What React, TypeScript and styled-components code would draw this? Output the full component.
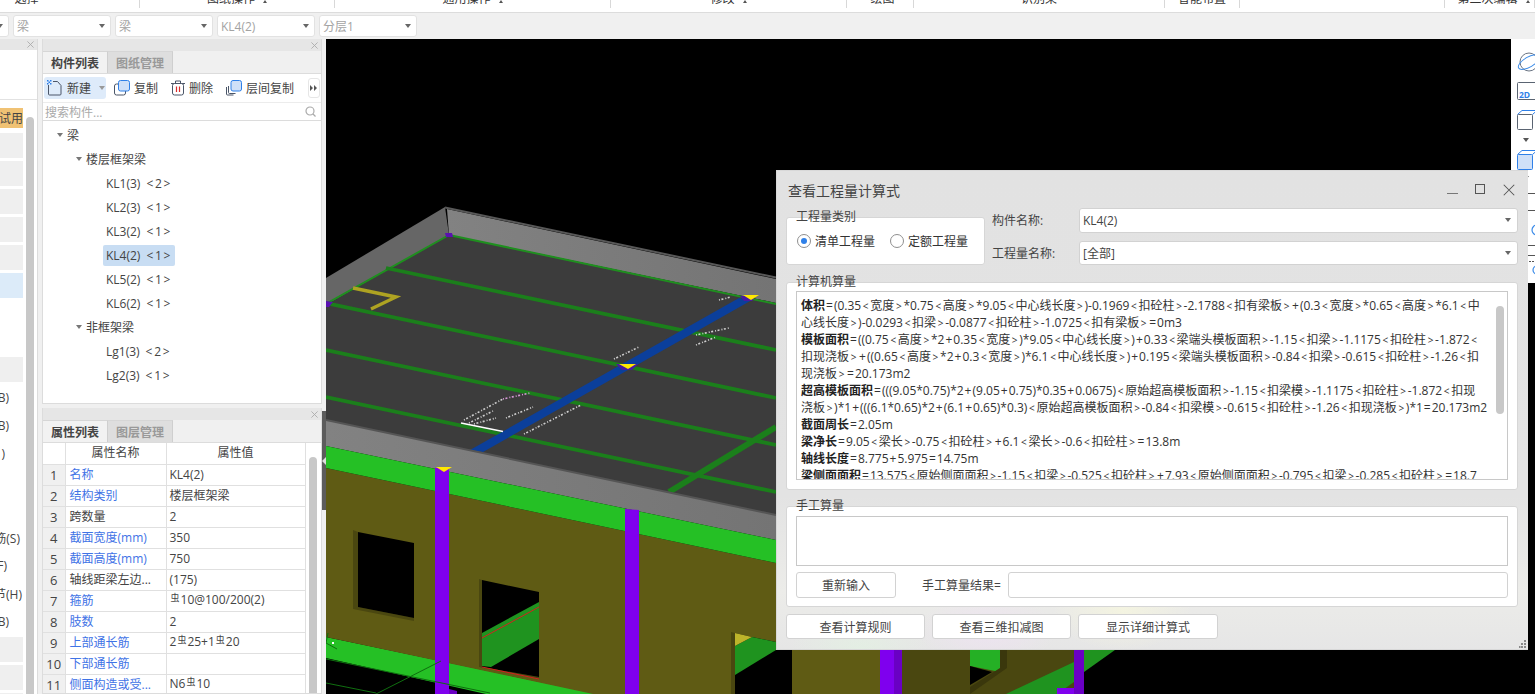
import React from "react";
import styled, { createGlobalStyle } from "styled-components";

const FONT = `"Open Sans","Noto Sans CJK SC",sans-serif`;

const Global = createGlobalStyle`
  html, body { margin: 0; padding: 0; background: #f0f0f0; overflow: hidden; }
  * { box-sizing: border-box; }
  body { font-family: ${FONT}; font-size: 12px; color: #444; }
  svg { flex: none; }
`;

const Page = styled.div`
  position: relative;
  width: 1535px;
  height: 694px;
  overflow: hidden;
  display: flex;
  flex-direction: column;
  background: #f0f0f0;
`;

/* ---------- ribbon remains ---------- */
const MenuBar = styled.div`
  flex: none;
  height: 13px;
  display: flex;
  background: #fff;
  border-bottom: 1px solid #dcdcdc;
  overflow: hidden;
`;
const MenuSection = styled.div<{ $w: number; $pl?: number; $pr?: number }>`
  flex: none;
  width: ${(p) => p.$w}px;
  height: 8px;
  padding: 0 ${(p) => p.$pr ?? 0}px 0 ${(p) => p.$pl ?? 0}px;
  display: flex;
  justify-content: center;
  gap: 8px;
  border-right: 1px solid #d8d8d8;
  color: #333;
  line-height: 14px;
  & > span { display: block; margin-top: -8px; white-space: nowrap; }
`;
const MenuCaret = styled.i`
  display: block;
  width: 0;
  height: 0;
  border-left: 2px solid transparent;
  border-right: 2px solid transparent;
  border-bottom: 3px solid #555;
`;

const SelectBar = styled.div`
  flex: none;
  height: 26px;
  display: flex;
  align-items: center;
  gap: 4px;
  margin-left: -89px;
`;
const BarSelect = styled.div`
  flex: none;
  width: 98px;
  height: 22px;
  display: flex;
  align-items: center;
  justify-content: space-between;
  padding: 0 5px 0 3px;
  background: #fff;
  border: 1px solid #e2e2e2;
  border-radius: 3px;
  color: #a3a3a3;
`;
const Caret = styled.i<{ $c?: string; $ml?: number }>`
  flex: none;
  display: block;
  width: 0;
  height: 0;
  margin-left: ${(p) => p.$ml ?? 0}px;
  border-left: 3px solid transparent;
  border-right: 3px solid transparent;
  border-top: 4px solid ${(p) => p.$c ?? "#666"};
`;

/* ---------- workspace ---------- */
const Workspace = styled.div`
  flex: 1;
  min-height: 0;
  display: flex;
`;

const Stub = styled.div`
  flex: none;
  width: 38px;
  margin-right: 4px;
  background: #fff;
  border-right: 1px solid #dcdcdc;
  display: flex;
  flex-direction: column;
  overflow: hidden;
`;
const StubHeader = styled.div`
  flex: none;
  height: 11px;
  background: #e6e6e6;
  display: flex;
  justify-content: flex-end;
  align-items: center;
  padding-right: 3px;
`;
const StubTop = styled.div`
  flex: none;
  height: 50px;
  border-bottom: 1px solid #e2e2e2;
`;
const StubBody = styled.div`
  flex: 1;
  display: flex;
  gap: 3px;
`;
const StubRows = styled.div`
  flex: none;
  width: 23px;
  padding-top: 8px;
  display: flex;
  flex-direction: column;
  gap: 3px;
`;
const StubRow = styled.div<{ $bg?: string; $h?: number; $inset?: number; $mb?: number }>`
  flex: none;
  height: ${(p) => p.$h ?? 25}px;
  margin-bottom: ${(p) => p.$mb ?? 0}px;
  background: ${(p) => p.$bg ?? "transparent"};
  display: flex;
  align-items: center;
  justify-content: flex-end;
  padding-right: ${(p) => p.$inset ?? 0}px;
  white-space: nowrap;
  overflow: hidden;
  color: #444;
`;
const StubThumb = styled.div`
  flex: none;
  width: 8px;
  margin-top: 17px;
  background: #c8c8c8;
  border-radius: 4px 4px 0 0;
`;

const Column = styled.div`
  flex: none;
  width: 280px;
  display: flex;
  flex-direction: column;
  gap: 4px;
`;
const Panel = styled.div<{ $h: number }>`
  flex: none;
  height: ${(p) => p.$h}px;
  background: #fff;
  border: 1px solid #dcdcdc;
  border-top: 0;
  display: flex;
  flex-direction: column;
  overflow: hidden;
`;
const PanelHeader = styled.div`
  flex: none;
  height: 12px;
  background: #e6e6e6;
  display: flex;
  justify-content: flex-end;
  align-items: center;
  padding-right: 3px;
`;
const TabStrip = styled.div`
  flex: none;
  height: 23px;
  display: flex;
  background: #f0f0f0;
  border-bottom: 1px solid #dcdcdc;
`;
const Tab = styled.div<{ $on?: boolean }>`
  flex: none;
  width: 65px;
  display: flex;
  align-items: center;
  justify-content: center;
  font-weight: 700;
  color: ${(p) => (p.$on ? "#444" : "#999")};
  background: ${(p) => (p.$on ? "#f2f2f2" : "#dedede")};
  border-right: 1px solid #cfcfcf;
  border-top: 1px solid #d6d6d6;
`;
const Tools = styled.div`
  flex: none;
  height: 28px;
  display: flex;
  align-items: center;
  padding-left: 1px;
`;
const ToolButton = styled.div<{ $w: number; $on?: boolean; $ml?: number }>`
  flex: none;
  width: ${(p) => p.$w}px;
  height: 22px;
  margin-left: ${(p) => p.$ml ?? 0}px;
  display: flex;
  align-items: center;
  gap: 4px;
  padding-left: ${(p) => (p.$on ? 3 : 1)}px;
  border-radius: 3px;
  background: ${(p) => (p.$on ? "#deebfa" : "transparent")};
  color: #444;
  white-space: nowrap;
`;
const MoreButton = styled.div`
  margin-left: auto;
  margin-right: 1px;
  width: 12px;
  height: 20px;
  border: 1px solid #e6e6e6;
  border-radius: 3px;
  display: flex;
  align-items: center;
  justify-content: center;
`;
const Search = styled.div`
  flex: none;
  height: 19px;
  display: flex;
  align-items: center;
  justify-content: space-between;
  padding: 0 5px 0 2px;
  border-top: 1px solid #ececec;
  border-bottom: 1px solid #dcdcdc;
  color: #aaa;
`;
const Tree = styled.div`
  flex: 1;
  padding-top: 2px;
`;
const TreeRow = styled.div<{ $indent: number }>`
  height: 24px;
  display: flex;
  align-items: center;
  padding-left: ${(p) => p.$indent}px;
  color: #444;
  white-space: nowrap;
`;
const TreeCaret = styled.i`
  display: block;
  width: 0;
  height: 0;
  margin-right: 4px;
  border-left: 3.5px solid transparent;
  border-right: 3.5px solid transparent;
  border-top: 4px solid #777;
`;
const TreeLabel = styled.span<{ $on?: boolean }>`
  display: block;
  height: 21px;
  line-height: 21px;
  padding: 0 3px;
  border-radius: 2px;
  background: ${(p) => (p.$on ? "#c8ddf3" : "transparent")};
`;
const Count = styled.span`
  margin-left: 6px;
  letter-spacing: 1.7px;
`;

const PropsBody = styled.div`
  flex: 1;
  min-height: 0;
  display: flex;
  overflow: hidden;
`;
const PropsTable = styled.table`
  flex: none;
  width: 262px;
  height: 0;
  border-collapse: collapse;
  table-layout: fixed;
  & th, & td {
    height: 21px;
    padding: 0 3px;
    border: 1px solid #e0e0e0;
    font-weight: 400;
    white-space: nowrap;
    overflow: hidden;
    text-overflow: clip;
    line-height: 18px;
    color: #444;
  }
  & tr:first-child th { border-top: 0; }
  & th:first-child, & td:first-child { border-left: 0; }
`;
const IndexCell = styled.td`
  && { background: #f0f0f0; text-align: center; padding: 0; font-size: 13px; }
`;
const NameCell = styled.td<{ $blue?: boolean }>`
  && { color: ${(p) => (p.$blue ? "#3f73e6" : "#444")}; padding-left: 4px; }
`;
const HeadCell = styled.th`
  && { text-align: center; }
`;
const Rebar = styled.span`
  font-size: 9px;
  position: relative;
  top: -3px;
  margin: 0 1px;
`;
const PropsTrack = styled.div`
  flex: 1;
  display: flex;
  justify-content: center;
  padding-top: 14px;
`;
const PropsThumb = styled.div`
  width: 8px;
  background: #c8c8c8;
  border-radius: 4px 4px 0 0;
`;

const Splitter = styled.div`
  flex: none;
  width: 4px;
  padding-top: 372px;
  background: #f0f0f0;
`;
const SplitHandle = styled.div`
  position: relative;
  height: 99px;
  background: #5c5c5c;
  &::after {
    content: "";
    position: absolute;
    left: 0;
    top: 46px;
    border-top: 4px solid transparent;
    border-bottom: 4px solid transparent;
    border-right: 4px solid #ddd;
  }
`;

const Canvas = styled.div`
  position: relative;
  flex: 1;
  background: #000;
  overflow: hidden;
`;
const Scene = styled.svg`
  display: block;
  width: 1209px;
  height: 655px;
`;
const ToolRail = styled.div`
  position: absolute;
  top: 0;
  right: 0;
  width: 24px;
  height: 244px;
  background: #fff;
  overflow: hidden;
  padding: 14px 0 0 6px;
  display: flex;
  flex-direction: column;
  align-items: flex-start;
`;
const RailIcon = styled.svg<{ $mb: number }>`
  flex: none;
  display: block;
  margin-bottom: ${(p) => p.$mb}px;
  overflow: visible;
`;
const RailCaret = styled.i`
  flex: none;
  display: block;
  margin: 0 0 8px 6px;
  width: 0;
  height: 0;
  border-left: 3px solid transparent;
  border-right: 3px solid transparent;
  border-top: 4px solid #555;
`;

/* ---------- dialog ---------- */
const Dialog = styled.div`
  position: absolute;
  left: 776px;
  top: 170px;
  width: 752px;
  height: 480px;
  padding: 0 10px 0 9px;
  background:
    radial-gradient(ellipse 70px 40px at 11% 100%, rgba(225,245,225,.55), transparent),
    radial-gradient(ellipse 70px 36px at 28% 96%, rgba(240,225,245,.7), transparent),
    radial-gradient(ellipse 70px 40px at 46% 92%, rgba(250,250,220,.6), transparent),
    linear-gradient(180deg, #e2e2e2 0%, #e3e3e3 68%, #ecece9 88%, #e6e6e6 100%);
  border: 1px solid #d8d8d8;
  border-width: 1px 0 1px 1px;
  color: #333;
`;
const TitleRow = styled.div`
  height: 37px;
  display: flex;
  align-items: center;
  justify-content: space-between;
  padding: 0 3px 0 2px;
`;
const Title = styled.div`
  font-size: 14px;
  color: #444;
`;
const WindowButtons = styled.div`
  display: flex;
  gap: 17px;
  align-items: center;
`;
const TopRow = styled.div`
  display: flex;
  height: 57px;
`;
const Group = styled.div<{ $w: number; $h: number; $mt: number }>`
  position: relative;
  flex: none;
  width: ${(p) => p.$w}px;
  height: ${(p) => p.$h}px;
  margin-top: ${(p) => p.$mt}px;
  background: #fff;
  border: 1px solid #d6d6d6;
  border-radius: 3px;
`;
const Legend = styled.span`
  position: absolute;
  left: 9px;
  top: -7px;
  line-height: 12px;
  color: #444;
`;
const RadioRow = styled.div`
  height: 100%;
  display: flex;
  align-items: center;
  padding: 0 0 0 10px;
`;
const Radio = styled.div<{ $ml?: number }>`
  display: flex;
  align-items: center;
  gap: 4px;
  margin-left: ${(p) => p.$ml ?? 0}px;
`;
const RadioDot = styled.i<{ $on?: boolean }>`
  display: flex;
  align-items: center;
  justify-content: center;
  width: 14px;
  height: 14px;
  border-radius: 50%;
  background: #fff;
  border: 1px solid #8f8f8f;
  &::after {
    content: "";
    display: ${(p) => (p.$on ? "block" : "none")};
    width: 6px;
    height: 6px;
    border-radius: 50%;
    background: #2f80e8;
  }
`;
const Fields = styled.div`
  flex: 1;
  margin-left: 7px;
  display: flex;
  flex-direction: column;
  gap: 8px;
`;
const Field = styled.div`
  display: flex;
  align-items: center;
  height: 25px;
`;
const FieldLabel = styled.span`
  flex: none;
  width: 87px;
  color: #444;
`;
const FieldSelect = styled.div`
  flex: 1;
  height: 100%;
  display: flex;
  align-items: center;
  justify-content: space-between;
  padding: 0 6px 0 3px;
  background: #fff;
  border: 1px solid #d2d2d2;
  border-radius: 3px;
  color: #444;
`;
const FormulaBox = styled.div`
  position: relative;
  margin: 8px 0 0 9px;
  width: 712px;
  height: 189px;
  border: 1px solid #c8c8c8;
  padding: 5px 0 0 4px;
  overflow: hidden;
`;
const FormulaLine = styled.div`
  height: 17px;
  line-height: 17px;
  white-space: nowrap;
  color: #333;
  & strong { font-weight: 700; color: #222; }
`;
const Sym = styled.span<{ $small?: boolean }>`
  font-size: ${(p) => (p.$small ? 10 : 12)}px;
  margin: 0 ${(p) => (p.$small ? 1.7 : 1)}px;
`;
const FormulaThumb = styled.div`
  position: absolute;
  right: 3px;
  top: 14px;
  width: 8px;
  height: 108px;
  border-radius: 4px;
  background: #c8c8c8;
`;
const ManualArea = styled.div`
  margin: 9px 0 0 9px;
  width: 712px;
  height: 50px;
  background: #fff;
  border: 1px solid #c8c8c8;
`;
const ManualRow = styled.div`
  margin: 6px 0 0 9px;
  width: 712px;
  height: 26px;
  display: flex;
  align-items: center;
`;
const ActionButton = styled.div<{ $w: number }>`
  flex: none;
  width: ${(p) => p.$w}px;
  height: 100%;
  display: flex;
  align-items: center;
  justify-content: center;
  background: #fff;
  border: 1px solid #d2d2d2;
  border-radius: 3px;
  color: #444;
`;
const ResultLabel = styled.span`
  flex: none;
  width: 112px;
  padding-left: 26px;
  white-space: nowrap;
  color: #444;
`;
const ResultInput = styled.div`
  flex: 1;
  height: 100%;
  background: #fff;
  border: 1px solid #d2d2d2;
  border-radius: 3px;
`;
const ButtonRow = styled.div`
  margin-top: 7px;
  height: 25px;
  display: flex;
  gap: 7px;
`;
const Grip = styled.svg`
  position: absolute;
  right: 1px;
  bottom: 1px;
`;

const CloseIcon = ({ c = "#aaa", s = 7 }: { c?: string; s?: number }) => (
  <svg width={s} height={s} viewBox="0 0 8 8"><path d="M.5.5l7 7M7.5.5l-7 7" stroke={c} strokeWidth={s > 8 ? 0.7 : 1} fill="none" /></svg>
);

const IconNew = () => (
  <svg width="16" height="16" viewBox="0 0 16 16">
    <path d="M1.500 5V14q0 1 1 1h10.500q1 0 1-1V5.500L10.500 1.500H6" fill="none" stroke="#4a5568" strokeWidth="1" />
    <path d="M0 0h1.500v1.500H0zM3 0h1.500v1.500H3zM0 3h1.500v1.500H0zM3 3h1.500v1.500H3zM1.500 1.500H3V3H1.500z" fill="#2f80e8" />
  </svg>
);
const IconCopy = () => (
  <svg width="16" height="16" viewBox="0 0 16 16">
    <rect x=".5" y="4" width="11" height="11" rx="2" fill="#fff" stroke="#4a5568" />
    <rect x="4.500" y=".5" width="11" height="10.500" rx="2" fill="#cfe0f8" stroke="#2f80e8" />
  </svg>
);
const IconTrash = () => (
  <svg width="14" height="16" viewBox="0 0 14 16">
    <path d="M0 3.500h14M4.500 3V1h5v2" fill="none" stroke="#4a5568" />
    <rect x="1.500" y="3.500" width="11" height="11.500" rx="2" fill="#fff" stroke="#4a5568" />
    <path d="M5.500 6.500v5.500M8.500 6.500v5.500" stroke="#d92c2c" strokeWidth="1.2" />
  </svg>
);
const IconLayerCopy = () => (
  <svg width="16" height="16" viewBox="0 0 16 16">
    <path d="M.5 7v7q0 1 1 1h6M2.500 6v6.500q0 1 1 1h6" fill="none" stroke="#4a5568" />
    <rect x="5" y=".5" width="10.500" height="10.500" rx="2" fill="#cfe0f8" stroke="#2f80e8" />
  </svg>
);

const LINES: [string, string][] = [
  ["体积", "=(0.35<宽度>*0.75<高度>*9.05<中心线长度>)-0.1969<扣砼柱>-2.1788<扣有梁板>+(0.3<宽度>*0.65<高度>*6.1<中"],
  ["", "心线长度>)-0.0293<扣梁>-0.0877<扣砼柱>-1.0725<扣有梁板>=0m3"],
  ["模板面积", "=((0.75<高度>*2+0.35<宽度>)*9.05<中心线长度>)+0.33<梁端头模板面积>-1.15<扣梁>-1.1175<扣砼柱>-1.872<"],
  ["", "扣现浇板>+((0.65<高度>*2+0.3<宽度>)*6.1<中心线长度>)+0.195<梁端头模板面积>-0.84<扣梁>-0.615<扣砼柱>-1.26<扣"],
  ["", "现浇板>=20.173m2"],
  ["超高模板面积", "=(((9.05*0.75)*2+(9.05+0.75)*0.35+0.0675)<原始超高模板面积>-1.15<扣梁模>-1.1175<扣砼柱>-1.872<扣现"],
  ["", "浇板>)*1+(((6.1*0.65)*2+(6.1+0.65)*0.3)<原始超高模板面积>-0.84<扣梁模>-0.615<扣砼柱>-1.26<扣现浇板>)*1=20.173m2"],
  ["截面周长", "=2.05m"],
  ["梁净长", "=9.05<梁长>-0.75<扣砼柱>+6.1<梁长>-0.6<扣砼柱>=13.8m"],
  ["轴线长度", "=8.775+5.975=14.75m"],
  ["梁侧面面积", "=13.575<原始侧面面积>-1.15<扣梁>-0.525<扣砼柱>+7.93<原始侧面面积>-0.795<扣梁>-0.285<扣砼柱>=18.7"],
];

const FormulaText = ({ text }: { text: string }) => (
  <>
    {text.split(/([<>=+])/).map((part, i) =>
      /^[<>=+]$/.test(part) ? (
        <Sym key={i} $small={part === "<" || part === ">"}>{part}</Sym>
      ) : (
        part
      )
    )}
  </>
);

const R = () => <Rebar>虫</Rebar>;
const PROPS: [string, boolean, React.ReactNode][] = [
  ["名称", true, "KL4(2)"],
  ["结构类别", true, "楼层框架梁"],
  ["跨数量", false, "2"],
  ["截面宽度(mm)", true, "350"],
  ["截面高度(mm)", true, "750"],
  ["轴线距梁左边...", false, "(175)"],
  ["箍筋", true, <><R />10@100/200(2)</>],
  ["肢数", true, "2"],
  ["上部通长筋", true, <>2<R />25+1<R />20</>],
  ["下部通长筋", true, ""],
  ["侧面构造或受...", true, <>N6<R />10</>],
];

const TREE = [
  { t: "KL1(3)", c: "<2>" }, { t: "KL2(3)", c: "<1>" }, { t: "KL3(2)", c: "<1>" },
  { t: "KL4(2)", c: "<1>", on: true }, { t: "KL5(2)", c: "<1>" }, { t: "KL6(2)", c: "<1>" },
];

const STUB: { t?: string; bg?: string; inset?: number }[] = [
  { bg: "#efefef" }, { bg: "#efefef" }, { bg: "#efefef" }, { bg: "#efefef" }, { bg: "#efefef" },
  { bg: "#dcebf9" }, {}, {}, { bg: "#efefef" },
  { t: "B)", inset: 14 }, { t: "B)", inset: 14 }, { t: ")", inset: 18 }, {}, {},
  { t: "筋(S)", inset: 3 }, { t: "F)", inset: 16 }, { t: "节(H)", inset: 1 }, { t: "B)", inset: 14 },
  { bg: "#efefef" }, { bg: "#efefef" }, { bg: "#efefef" },
];

const F = "#1b7f1b";
const BuildingScene = () => (
  <Scene viewBox="326 39 1209 655">
    <defs>
      <linearGradient id="wallFade" x1="0" x2="1" y1="0" y2="0">
        <stop offset="0" stopColor="#828282" />
        <stop offset="1" stopColor="#747474" />
      </linearGradient>
    </defs>
    {/* lower floor */}
    <polygon points="326,637 593,693 593,694 486,694 326,658" fill="#25c025" />
    {/* wall */}
    <polygon points="326,468 776,563 776,642 752,637 735,633 735,694 593,694 326,637" fill="#5f5b14" />
    <polygon points="731,632 735,633 735,694 731,694" fill="#4a4710" />
    <polygon points="735,646 752,637 776,642 776,650 735,675" fill="#1f931f" />
    <polygon points="735,633 752,637 735,646" fill="#bdb42a" />
    {/* window 1 */}
    <polygon points="353,530 358,532 358,607 414,618 414,621 353,609" fill="#4a4710" />
    <polygon points="358,532 414,543 414,618 358,607" fill="#000" />
    {/* window 2 */}
    <polygon points="479,579 482,580 482,667 539,677 539,679 479,667" fill="#4a4710" />
    <polygon points="482,580 539,592 539,677 482,667" fill="#000" />
    <polygon points="482,633 539,602 539,639 491,667 482,666" fill="#1f931f" />
    <line x1="482" y1="638" x2="539" y2="607" stroke="#d42020" strokeWidth="1" />
    <line x1="482" y1="667" x2="539" y2="679" stroke="#d42020" strokeWidth="1" />
    {/* roof */}
    <polygon points="326,278 445,207 449,235 326,305" fill="#666" />
    <polygon points="447,209 776,279 776,303 449,235" fill="url(#wallFade)" />
    <polygon points="326,305 449,235 776,303 776,515 326,420" fill="#3c3c3c" />
    <line x1="445" y1="207.500" x2="776" y2="277.500" stroke="#585858" strokeWidth="2" />
    <line x1="449" y1="235" x2="776" y2="304" stroke="#1f8f1f" strokeWidth="2" />
    <line x1="449" y1="235" x2="326" y2="304" stroke="#1f8f1f" strokeWidth="2" />
    <line x1="386" y1="268" x2="776" y2="350" stroke={F} strokeWidth="3.8" />
    <line x1="326" y1="303" x2="776" y2="398" stroke={F} strokeWidth="3.8" />
    <line x1="326" y1="350" x2="776" y2="445" stroke={F} strokeWidth="3.8" />
    <line x1="326" y1="397" x2="776" y2="492" stroke={F} strokeWidth="3.8" />
    <line x1="776" y1="427" x2="669" y2="492" stroke={F} strokeWidth="6" />
    <polyline points="353,288 396,297 371,309" fill="none" stroke="#aea322" strokeWidth="3.4" />
    <polygon points="739,298 752,300 483,452 470,450" fill="#0b3f9b" />
    <line x1="461" y1="423" x2="503" y2="431.500" stroke="#fff" strokeWidth="1.5" />
    <g stroke="#cfcfcf" strokeWidth="1.6" strokeDasharray="1 1.500 2 2" fill="none">
      <line x1="464" y1="420" x2="503" y2="399" />
      <line x1="469" y1="423" x2="493" y2="411" />
      <line x1="474" y1="424" x2="496" y2="418" />
      <line x1="506" y1="418" x2="533" y2="407" />
      <line x1="524" y1="434" x2="581" y2="405" />
      <line x1="503" y1="399" x2="530" y2="393" stroke="#d89ad8" />
      <line x1="614" y1="359" x2="639" y2="347" />
      <line x1="719" y1="300" x2="731" y2="297" />
      <line x1="696" y1="335" x2="729" y2="328" />
      <line x1="696" y1="345" x2="716" y2="337" />
      <line x1="433" y1="462" x2="444" y2="456" stroke="#8f8f8f" />
    </g>
    <polygon points="326,420 776,515 776,540 326,446" fill="url(#wallFade)" />
    <line x1="326" y1="420" x2="776" y2="515" stroke="#555" strokeWidth="2" />
    <polygon points="326,446 776,540 776,563 326,468" fill="#25c025" />
    {/* columns */}
    <polygon points="435,468 449,468 449,694 435,694" fill="#7f00ee" />
    <polygon points="449,689 457,691 457,694 449,694" fill="#6a00c4" />
    <polygon points="625,509 639,510 639,694 625,694" fill="#7f00ee" />
    {/* markers */}
    <polygon points="445,233 452,233 453,237 446,237" fill="#5a10b0" />
    <polygon points="326,301 333,302 329,307 326,307" fill="#5a10b0" />
    <polygon points="740,296 756,296 752,301 744,301" fill="#4a1aa0" />
    <polygon points="616,364 638,364 632,370 622,370" fill="#4a1aa0" />
    <polygon points="743,295 759,295 751,300" fill="#ffe900" />
    <polygon points="619,364 636,364 628,369" fill="#ffe900" />
    <polygon points="436,467 452,467 444,472" fill="#ffe900" />
    {/* thin lines */}
    <g stroke="#0f6e0f" strokeWidth="1" fill="none">
      <line x1="326" y1="659" x2="490" y2="693" />
      <line x1="376" y1="694" x2="441" y2="661" />
      <line x1="326" y1="683" x2="376" y2="693" />
      <polyline points="328,633 326,643 337,649" />
    </g>
    <rect x="332" y="642" width="2" height="2" fill="#fff" />
    {/* below the dialog */}
    <rect x="792" y="645" width="88" height="49" fill="#5f5b14" />
    <rect x="880" y="645" width="14" height="49" fill="#7f00ee" />
    <rect x="894" y="645" width="8" height="49" fill="#6a00c4" />
    <rect x="902" y="645" width="172" height="49" fill="#4a4710" />
    <polygon points="970,645 1000,645 1000,672 970,666" fill="#25b025" />
    <polygon points="970,666 992,672 970,685" fill="#000" />
    <polygon points="1000,645 1007,645 1007,668 970,694 970,687 1000,668" fill="#3a370c" />
    <polygon points="1006,694 1074,662 1074,682 1057,694" fill="#1f931f" />
    <rect x="1074" y="645" width="10" height="49" fill="#6a00c4" />
    <rect x="1057" y="688" width="17" height="6" fill="#7f00ee" />
    <polygon points="1084,645 1122,645 1084,672" fill="#1f931f" />
  </Scene>
);

export default function App() {
  return (
    <Page>
      <Global />
      <MenuBar>
        <MenuSection $w={140} $pr={86}><span>选择</span></MenuSection>
        <MenuSection $w={195}><span>图纸操作</span><MenuCaret /></MenuSection>
        <MenuSection $w={276}><span>通用操作</span><MenuCaret /></MenuSection>
        <MenuSection $w={236}><span>修改</span><MenuCaret /></MenuSection>
        <MenuSection $w={67} $pl={5}><span>绘图</span></MenuSection>
        <MenuSection $w={251}><span>识别梁</span></MenuSection>
        <MenuSection $w={75}><span>智能布置</span></MenuSection>
        <MenuSection $w={205}></MenuSection>
        <MenuSection $w={90} $pl={8}><span>第二次编辑</span><MenuCaret /></MenuSection>
      </MenuBar>
      <SelectBar>
        <BarSelect><span>层</span><Caret /></BarSelect>
        <BarSelect><span>梁</span><Caret /></BarSelect>
        <BarSelect><span>梁</span><Caret /></BarSelect>
        <BarSelect><span>KL4(2)</span><Caret /></BarSelect>
        <BarSelect><span>分层1</span><Caret /></BarSelect>
      </SelectBar>
      <Workspace>
        <Stub>
          <StubHeader><CloseIcon /></StubHeader>
          <StubTop />
          <StubBody>
            <StubRows>
              <StubRow $bg="#f0c274" $h={20} $mb={2}>测试用</StubRow>
              {STUB.map((s, i) => (
                <StubRow key={i} $bg={s.bg} $inset={s.inset}>{s.t}</StubRow>
              ))}
            </StubRows>
            <StubThumb />
          </StubBody>
        </Stub>
        <Column>
          <Panel $h={365}>
            <PanelHeader><CloseIcon /></PanelHeader>
            <TabStrip><Tab $on>构件列表</Tab><Tab>图纸管理</Tab></TabStrip>
            <Tools>
              <ToolButton $w={62} $on><IconNew /><span>新建</span><Caret $c="#999" $ml={4} /></ToolButton>
              <ToolButton $w={45} $ml={7}><IconCopy /><span>复制</span></ToolButton>
              <ToolButton $w={45} $ml={12}><IconTrash /><span>删除</span></ToolButton>
              <ToolButton $w={70} $ml={10}><IconLayerCopy /><span>层间复制</span></ToolButton>
              <MoreButton>
                <svg width="8" height="6" viewBox="0 0 8 6"><path d="M0 0l3 3-3 3zM4 0l3 3-3 3z" fill="#555" /></svg>
              </MoreButton>
            </Tools>
            <Search>
              <span>搜索构件...</span>
              <svg width="11" height="11" viewBox="0 0 11 11"><circle cx="5" cy="5" r="4" fill="none" stroke="#aaa" strokeWidth="1.2" /><path d="M8 8l2.500 2.500" stroke="#aaa" strokeWidth="1.2" /></svg>
            </Search>
            <Tree>
              <TreeRow $indent={14}><TreeCaret /><span>梁</span></TreeRow>
              <TreeRow $indent={33}><TreeCaret /><span>楼层框架梁</span></TreeRow>
              {TREE.map((n) => (
                <TreeRow key={n.t} $indent={60}>
                  <TreeLabel $on={n.on}>{n.t}<Count>{n.c}</Count></TreeLabel>
                </TreeRow>
              ))}
              <TreeRow $indent={33}><TreeCaret /><span>非框架梁</span></TreeRow>
              <TreeRow $indent={60}><TreeLabel>Lg1(3)<Count>{"<2>"}</Count></TreeLabel></TreeRow>
              <TreeRow $indent={60}><TreeLabel>Lg2(3)<Count>{"<1>"}</Count></TreeLabel></TreeRow>
            </Tree>
          </Panel>
          <Panel $h={286}>
            <PanelHeader><CloseIcon /></PanelHeader>
            <TabStrip><Tab $on>属性列表</Tab><Tab>图层管理</Tab></TabStrip>
            <PropsBody>
              <PropsTable>
                <colgroup><col width="22" /><col width="101" /><col width="139" /></colgroup>
                <thead>
                  <tr><HeadCell /><HeadCell>属性名称</HeadCell><HeadCell>属性值</HeadCell></tr>
                </thead>
                <tbody>
                  {PROPS.map(([name, blue, value], i) => (
                    <tr key={name}>
                      <IndexCell>{i + 1}</IndexCell>
                      <NameCell $blue={blue}>{name}</NameCell>
                      <td>{value}</td>
                    </tr>
                  ))}
                </tbody>
              </PropsTable>
              <PropsTrack><PropsThumb /></PropsTrack>
            </PropsBody>
          </Panel>
        </Column>
        <Splitter><SplitHandle /></Splitter>
        <Canvas>
          <BuildingScene />
          <ToolRail>
            <RailIcon $mb={11} width="24" height="18" viewBox="0 0 24 18">
              <circle cx="12" cy="9" r="9" fill="none" stroke="#6a7483" />
              <ellipse cx="12" cy="9" rx="12" ry="5" transform="rotate(-30 12 9)" fill="none" stroke="#3b8be8" />
            </RailIcon>
            <RailIcon $mb={10} width="26" height="18" viewBox="0 0 26 18">
              <rect x=".5" y=".5" width="25" height="17" rx="1" fill="#fff" stroke="#5a6472" />
              <text x="2" y="15.500" fontSize="8.500" fontWeight="700" fill="#2f80e8" fontFamily="Open Sans">2D</text>
            </RailIcon>
            <RailIcon $mb={8} width="26" height="20" viewBox="0 0 26 20">
              <rect x=".5" y="4.500" width="15" height="15" rx="1" fill="#fff" stroke="#5a6472" />
              <path d="M.5 4.500L5 .5h21M15.500 4.500L20 .5" fill="none" stroke="#2f80e8" />
            </RailIcon>
            <RailCaret />
            <RailIcon $mb={6} width="26" height="20" viewBox="0 0 26 20">
              <rect x=".5" y="4.500" width="15" height="15" rx="1" fill="#cfe0f8" stroke="#2f80e8" />
              <path d="M.5 4.500L5 .5h21M15.500 4.500L20 .5" fill="none" stroke="#2f80e8" />
            </RailIcon>
            <RailCaret />
            <RailIcon $mb={0} width="24" height="90" viewBox="0 0 24 90">
              <g stroke="#555" fill="none">
                <path d="M9 5.500h15M9 22.500h15" />
                <path d="M9 57.500h15M9 67.500h15" />
                <path d="M9 73.500h15" strokeDasharray="2 1" />
              </g>
              <circle cx="20" cy="42" r="5" fill="none" stroke="#3b8be8" strokeWidth="1.2" />
              <circle cx="20" cy="82" r="4" fill="none" stroke="#3b8be8" strokeWidth="1.2" />
            </RailIcon>
          </ToolRail>
        </Canvas>
      </Workspace>
      <Dialog>
        <TitleRow>
          <Title>查看工程量计算式</Title>
          <WindowButtons>
            <svg width="11" height="11" viewBox="0 0 11 11"><path d="M0 9.500h11" stroke="#777" /></svg>
            <svg width="11" height="11" viewBox="0 0 11 11"><rect x=".5" y=".5" width="9" height="9" fill="none" stroke="#555" /></svg>
            <CloseIcon c="#555" s={12} />
          </WindowButtons>
        </TitleRow>
        <TopRow>
          <Group $w={199} $h={48} $mt={9}>
            <Legend>工程量类别</Legend>
            <RadioRow>
              <Radio><RadioDot $on /><span>清单工程量</span></Radio>
              <Radio $ml={15}><RadioDot /><span>定额工程量</span></Radio>
            </RadioRow>
          </Group>
          <Fields>
            <Field><FieldLabel>构件名称:</FieldLabel><FieldSelect><span>KL4(2)</span><Caret /></FieldSelect></Field>
            <Field><FieldLabel>工程量名称:</FieldLabel><FieldSelect><span>[全部]</span><Caret /></FieldSelect></Field>
          </Fields>
        </TopRow>
        <Group $w={732} $h={208} $mt={17}>
          <Legend>计算机算量</Legend>
          <FormulaBox>
            {LINES.map(([b, t], i) => (
              <FormulaLine key={i}>{b ? <strong>{b}</strong> : null}<FormulaText text={t} /></FormulaLine>
            ))}
            <FormulaThumb />
          </FormulaBox>
        </Group>
        <Group $w={732} $h={101} $mt={16}>
          <Legend>手工算量</Legend>
          <ManualArea />
          <ManualRow>
            <ActionButton $w={100}>重新输入</ActionButton>
            <ResultLabel>手工算量结果=</ResultLabel>
            <ResultInput />
          </ManualRow>
        </Group>
        <ButtonRow>
          <ActionButton $w={139}>查看计算规则</ActionButton>
          <ActionButton $w={139}>查看三维扣减图</ActionButton>
          <ActionButton $w={140}>显示详细计算式</ActionButton>
        </ButtonRow>
        <Grip width="8" height="8" viewBox="0 0 8 8">
          <path d="M5 0h2v2H5zM2 3h2v2H2zM5 3h2v2H5zM0 6h1.500v2H0zM2 6h2v2H2zM5 6h2v2H5z" fill="#888" />
        </Grip>
      </Dialog>
    </Page>
  );
}
